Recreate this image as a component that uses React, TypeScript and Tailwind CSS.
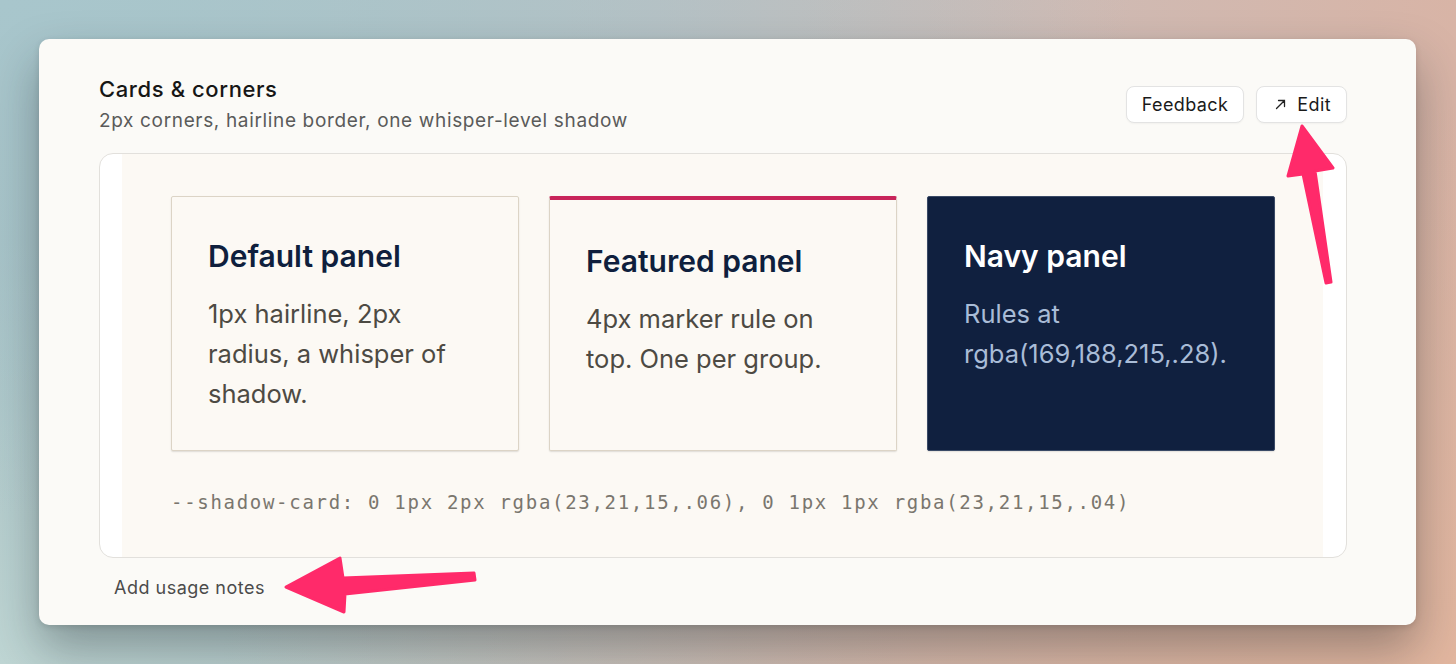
import React from 'react';

const sans = "font-['Inter','Noto_Sans',sans-serif]";

function Panel({
  title,
  body,
  variant = 'default',
}: {
  title: string;
  body: React.ReactNode;
  variant?: 'default' | 'featured' | 'navy';
}) {
  if (variant === 'navy') {
    return (
      <div className="h-[255px] rounded-[2px] border border-[#3a4a66] bg-[#10203f] px-9 pt-[41px] shadow-[0_1px_2px_rgba(23,21,15,0.06),0_1px_1px_rgba(23,21,15,0.04)]">
        <h3 className="text-[30px] leading-[36px] font-semibold text-white">{title}</h3>
        <p className="mt-[20px] text-[25.5px] leading-[40px] text-[#a9bcd7]">{body}</p>
      </div>
    );
  }
  const featured = variant === 'featured';
  return (
    <div
      className={`h-[255px] rounded-[2px] border border-[#dcd4c6] bg-[#fcf9f4] px-9 shadow-[0_1px_2px_rgba(23,21,15,0.08),0_1px_1px_rgba(23,21,15,0.05)] ${
        featured ? 'border-t-4 border-t-[#c8245a] pt-[43px]' : 'pt-[41px]'
      }`}
    >
      <h3 className="text-[30px] leading-[36px] font-semibold text-[#0f1f3d]">{title}</h3>
      <p className="mt-[20px] text-[25.5px] leading-[40px] text-[#4d4a43]">{body}</p>
    </div>
  );
}

export default function App() {
  return (
    <div
      className={`relative min-h-[664px] w-full overflow-hidden bg-[radial-gradient(ellipse_at_0%_0%,#a8c6cc_0%,transparent_55%),radial-gradient(ellipse_at_100%_100%,#e2b69f_0%,transparent_60%),radial-gradient(ellipse_at_0%_100%,#bfd6d4_0%,transparent_45%),linear-gradient(90deg,#a7c2c6_0%,#bdbec0_45%,#cfbab3_75%,#d8b4a6_100%)] px-[39px] pt-[39px] ${sans}`}
    >
      {/* window */}
      <div className="h-[586px] w-[1377px] rounded-[10px] bg-[#fbfaf7] pl-[60px] pr-[69px] pt-[36px] shadow-[0_24px_48px_rgba(20,30,35,0.35),0_2px_6px_rgba(0,0,0,0.12)]">
        <div className="flex items-start justify-between">
          <div>
            <h2 className="text-[22px] leading-[28px] font-medium tracking-[0.6px] text-[#161616]">Cards &amp; corners</h2>
            <p className="mt-[6px] text-[19px] leading-[24px] tracking-[0.65px] text-[#5a5a5a]">
              2px corners, hairline border, one whisper-level shadow
            </p>
          </div>
          <div className="mt-[11px] flex gap-3">
            <button className="h-[37px] rounded-[8px] border border-[#e3e3e3] bg-white px-[15px] text-[18px] tracking-[0.4px] text-[#1a1a1a] shadow-[0_1px_2px_rgba(0,0,0,0.04)]">
              Feedback
            </button>
            <button className="flex h-[37px] items-center gap-[11px] rounded-[8px] border border-[#e3e3e3] bg-white pl-[18px] pr-[15px] text-[18px] tracking-[0.4px] text-[#1a1a1a] shadow-[0_1px_2px_rgba(0,0,0,0.04)]">
              <svg width="11" height="11" viewBox="0 0 11 11" fill="none" stroke="#222" strokeWidth="1.3" strokeLinecap="round">
                <path d="M1.5 9.5 L9.5 1.5 M3.5 1.5 H9.5 V7.5" />
              </svg>
              Edit
            </button>
          </div>
        </div>

        {/* preview frame */}
        <div className="mt-[20px] h-[405px] overflow-hidden rounded-[14px] border border-[#e2e0dc] bg-white px-[22px] pr-[23px]">
          <div className="h-full bg-[#fcf9f4] pl-[49px] pr-[48px] pt-[42px]">
            <div className="grid grid-cols-3 gap-[30px]">
              <Panel title="Default panel" body={<>1px hairline, 2px<br />radius, a whisper of<br />shadow.</>} />
              <Panel variant="featured" title="Featured panel" body={<>4px marker rule on<br />top. One per group.</>} />
              <Panel variant="navy" title="Navy panel" body={<>Rules at<br />rgba(169,188,215,.28).</>} />
            </div>
            <p className="mt-[37px] font-['DejaVu_Sans_Mono','Liberation_Mono',monospace] text-[19px] leading-[28px] tracking-[1.7px] whitespace-nowrap text-[#7a766e]">
              --shadow-card: 0 1px 2px rgba(23,21,15,.06), 0 1px 1px rgba(23,21,15,.04)
            </p>
          </div>
        </div>

        <div className="mt-[18px] pl-[15px] text-[18px] leading-[24px] tracking-[0.5px] text-[#4b4b4b]">Add usage notes</div>
      </div>

      {/* annotation arrows */}
      <svg className="pointer-events-none absolute left-0 top-0" width="1456" height="664" viewBox="0 0 1456 664">
        <g fill="#ff2a6a" stroke="#ff2a6a" strokeWidth="3" strokeLinejoin="round">
          <polygon points="1302,126 1333,168 1315,171 1331,282 1326,283 1303,174 1288,176" />
          <polygon points="286,587 340,558 343,578 474,573 475,580 345,594 344,612" />
        </g>
      </svg>
    </div>
  );
}
